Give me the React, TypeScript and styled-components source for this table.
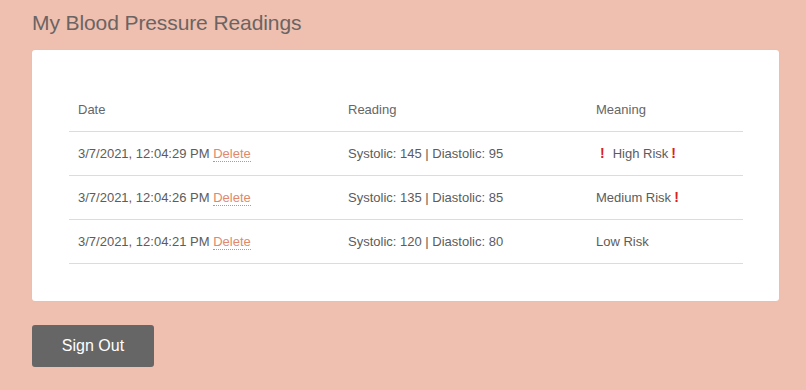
import styled, { createGlobalStyle } from "styled-components";

const GlobalStyle = createGlobalStyle`
  body {
    margin: 0;
    background: #efc0af;
    font-family: "Liberation Sans", Arial, sans-serif;
  }
`;

const Page = styled.div`
  padding: 9px 27px 20px 32px;
`;

const Title = styled.h1`
  margin: 0 0 14px;
  font-size: 21px;
  line-height: 27px;
  font-weight: 400;
  color: #6b6464;
  letter-spacing: -0.1px;
`;

const Card = styled.div`
  background: #fff;
  border-radius: 3px;
  padding: 38px 36px 37px 37px;
  box-shadow: 0 0 1px rgba(0, 0, 0, 0.08);
`;

const Table = styled.table`
  width: 100%;
  table-layout: fixed;
  border-collapse: collapse;
  font-size: 13px;
  color: #5c5c5c;
`;

const HeadCell = styled.th<{ $w?: number }>`
  box-sizing: border-box;
  text-align: left;
  font-weight: 400;
  color: #666;
  padding: 0 9px;
  height: 43px;
  width: ${p => (p.$w ? `${p.$w}px` : "auto")};
  border-bottom: 1px solid #dcdcdc;
`;

const Cell = styled.td`
  padding: 0 9px;
  height: 43px;
  border-bottom: 1px solid #dcdcdc;
  white-space: nowrap;
`;

const DeleteLink = styled.a`
  color: #e0896c;
  text-decoration: none;
  border-bottom: 1px dotted #e0896c;
  cursor: pointer;
`;

const Bang = styled.span<{ $lead?: boolean }>`
  color: #d8211c;
  font-weight: 700;
  font-size: 14px;
  margin: 0 ${p => (p.$lead ? "8px" : "0")} 0 ${p => (p.$lead ? "4px" : "3px")};
`;

const SignOut = styled.button`
  margin-top: 24px;
  width: 122px;
  height: 42px;
  background: #666;
  color: #fff;
  border: none;
  border-radius: 3px;
  font-family: "Liberation Sans", Arial, sans-serif;
  font-size: 16px;
  cursor: pointer;
`;

type Level = "High" | "Medium" | "Low";

const readings: { date: string; sys: number; dia: number; level: Level }[] = [
  { date: "3/7/2021, 12:04:29 PM", sys: 145, dia: 95, level: "High" },
  { date: "3/7/2021, 12:04:26 PM", sys: 135, dia: 85, level: "Medium" },
  { date: "3/7/2021, 12:04:21 PM", sys: 120, dia: 80, level: "Low" },
];

const Meaning = (props: { level: Level }) => {
  if (props.level === "High") {
    return <>
      <Bang $lead>!</Bang>High Risk<Bang>!</Bang>
    </>;
  }
  if (props.level === "Medium") {
    return <>Medium Risk<Bang>!</Bang></>;
  }
  return <>Low Risk</>;
};

const App = () => {
  return (
    <Page>
      <GlobalStyle />
      <Title>My Blood Pressure Readings</Title>
      <Card>
        <Table>
          <thead>
            <tr>
              <HeadCell $w={270}>Date</HeadCell>
              <HeadCell $w={248}>Reading</HeadCell>
              <HeadCell>Meaning</HeadCell>
            </tr>
          </thead>
          <tbody>
            {readings.map(r => (
              <tr key={r.date}>
                <Cell>{r.date} <DeleteLink>Delete</DeleteLink></Cell>
                <Cell>Systolic: {r.sys} | Diastolic: {r.dia}</Cell>
                <Cell><Meaning level={r.level} /></Cell>
              </tr>
            ))}
          </tbody>
        </Table>
      </Card>
      <SignOut>Sign Out</SignOut>
    </Page>
  );
};

export default App;
